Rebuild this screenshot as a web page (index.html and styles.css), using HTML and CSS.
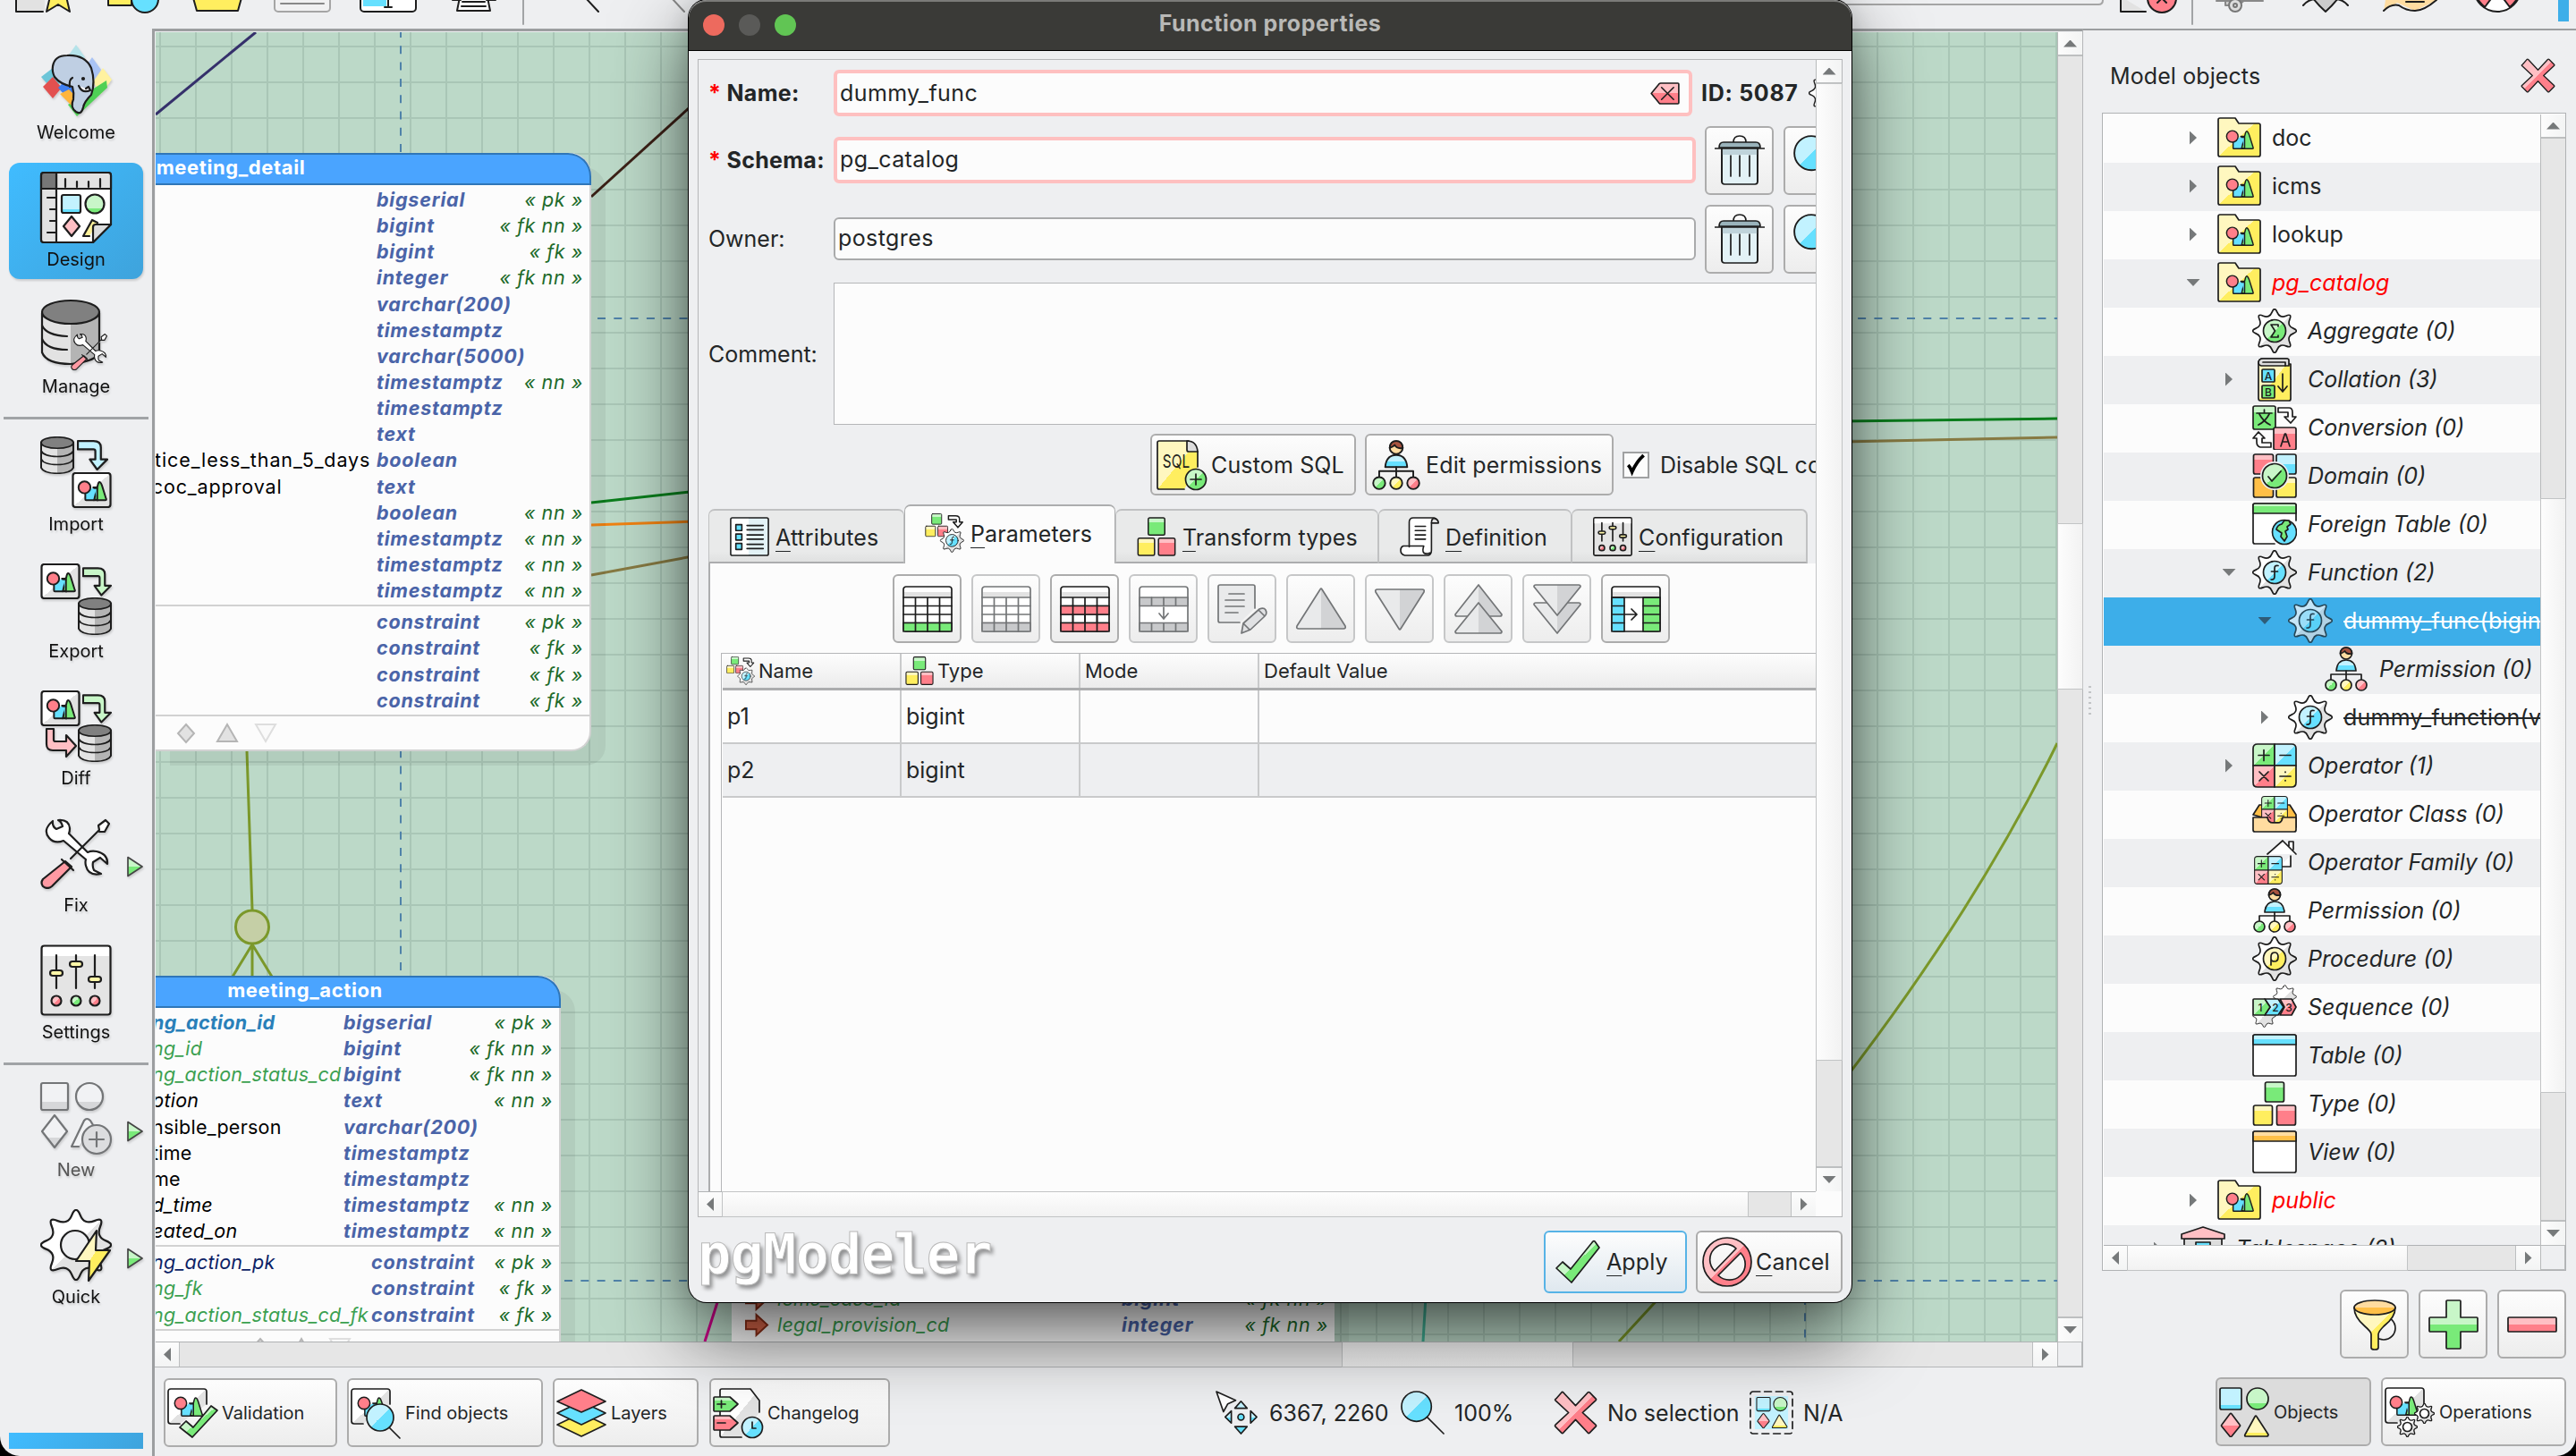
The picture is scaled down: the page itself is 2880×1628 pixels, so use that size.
FILE: index.html
```html
<!DOCTYPE html>
<html lang="en">
<head>
<meta charset="utf-8">
<title>pgModeler</title>
<link rel="stylesheet" href="styles.css">
</head>
<body>
<svg class="sprite" width="0" height="0" aria-hidden="true">
  <defs>
    <linearGradient id="dG" x1="0" y1="0" x2="1" y2="1"><stop offset=".5" stop-color="#c8f6c8"/><stop offset=".5" stop-color="#79ea79"/></linearGradient>
    <linearGradient id="dB" x1="0" y1="0" x2="1" y2="1"><stop offset=".5" stop-color="#c2f2ff"/><stop offset=".5" stop-color="#66e0ff"/></linearGradient>
    <linearGradient id="dR" x1="0" y1="0" x2="1" y2="1"><stop offset=".5" stop-color="#ffbfc4"/><stop offset=".5" stop-color="#ff7f8a"/></linearGradient>
    <linearGradient id="dY" x1="0" y1="0" x2="1" y2="1"><stop offset=".5" stop-color="#fff7bf"/><stop offset=".5" stop-color="#ffee5f"/></linearGradient>
    <linearGradient id="dW" x1="0" y1="0" x2="1" y2="1"><stop offset=".5" stop-color="#fff"/><stop offset=".5" stop-color="#e2e2e2"/></linearGradient>
    <linearGradient id="vG" x1="0" y1="0" x2="0" y2="1"><stop offset=".28" stop-color="#c8f6c8"/><stop offset=".28" stop-color="#79ea79"/></linearGradient>
    <linearGradient id="vB" x1="0" y1="0" x2="0" y2="1"><stop offset=".5" stop-color="#c2f2ff"/><stop offset=".5" stop-color="#66e0ff"/></linearGradient>
    <linearGradient id="vR" x1="0" y1="0" x2="0" y2="1"><stop offset=".28" stop-color="#ffbfc4"/><stop offset=".28" stop-color="#ff7f8a"/></linearGradient>
    <linearGradient id="vY" x1="0" y1="0" x2="0" y2="1"><stop offset=".28" stop-color="#fff7bf"/><stop offset=".28" stop-color="#ffee5f"/></linearGradient>
    <linearGradient id="vO" x1="0" y1="0" x2="0" y2="1"><stop offset=".5" stop-color="#ffdca0"/><stop offset=".5" stop-color="#ffbf47"/></linearGradient>
    <linearGradient id="bB" x1="0" y1="0" x2="0" y2="1"><stop offset=".8" stop-color="#c2f2ff"/><stop offset=".8" stop-color="#66e0ff"/></linearGradient>
    <linearGradient id="bG" x1="0" y1="0" x2="0" y2="1"><stop offset=".72" stop-color="#c8f6c8"/><stop offset=".72" stop-color="#79ea79"/></linearGradient>
    <linearGradient id="bR" x1="0" y1="0" x2="0" y2="1"><stop offset=".5" stop-color="#ffbfc4"/><stop offset=".5" stop-color="#ff7f8a"/></linearGradient>
    <linearGradient id="bY" x1="0" y1="0" x2="0" y2="1"><stop offset=".82" stop-color="#fff7bf"/><stop offset=".82" stop-color="#ffee5f"/></linearGradient>
    <linearGradient id="bW" x1="0" y1="0" x2="0" y2="1"><stop offset=".7" stop-color="#f1f2f4"/><stop offset=".7" stop-color="#d6d7d9"/></linearGradient>
    <linearGradient id="hT" x1="0" y1="0" x2="1" y2="0"><stop offset=".5" stop-color="#e9eaeb"/><stop offset=".5" stop-color="#d2d3d5"/></linearGradient>
    <linearGradient id="hD" x1="0" y1="0" x2="1" y2="0"><stop offset=".5" stop-color="#e2e2e2"/><stop offset=".5" stop-color="#b4b4b4"/></linearGradient>
    <linearGradient id="hA" x1="0" y1="0" x2="0" y2="1"><stop offset=".5" stop-color="#c8f6c8"/><stop offset=".5" stop-color="#79ea79"/></linearGradient>
  </defs>

  <symbol id="trio" viewBox="0 0 36 28"><path d="M20 10h7v15q0 1-1 1H11q-1 0-1-1V17" fill="#66e0ff"/><path d="M21 26l5-20q1-4 3-2 1 1 2 4l5 16q1 2-1 2h-10q-2-1-4 0z" fill="#79ea79"/><path d="M21 11h4v15" fill="#66e0ff"/><circle cx="9" cy="10" r="7.5" fill="#ff7f8a"/></symbol>
  <symbol id="folder" viewBox="0 0 50 50"><path d="M2 5q0-2 2-2h17l4 6h22q2 0 2 2v33q0 2-2 2H4q-2 0-2-2z" fill="url(#dY)"/><use href="#trio" x="7" y="15" width="37" height="24"/></symbol>
  <symbol id="gear" viewBox="0 0 50 50"><path d="M22.1 4.1Q25-3 27.9 4.1 30.700 11.1 37.800 8.200 44.800 5.200 41.900 12.200 38.900 19.300 45.900 22.100 53 25 45.900 27.900 38.900 30.700 41.900 37.800 44.800 44.800 37.800 41.900 30.700 38.900 27.900 45.900 25 53 22.100 45.900 19.300 38.900 12.200 41.900 5.200 44.800 8.100 37.800 11.100 30.700 4.100 27.900-3 25 4.100 22.100 11.100 19.300 8.100 12.200 5.200 5.200 12.200 8.200 19.300 11.100 22.100 4.100z" fill="url(#dW)"/></symbol>
  <symbol id="fn" viewBox="0 0 50 50"><use href="#gear"/><circle cx="25" cy="25" r="12.500" fill="url(#dB)"/><path d="M29 17.500q-4-1-4 3v9q0 4-4 3.500M21.500 24h7" fill="none"/></symbol>
  <symbol id="agg" viewBox="0 0 50 50"><use href="#gear"/><circle cx="25" cy="25" r="12.500" fill="url(#dG)"/><path d="M29 20v-2h-8l4.500 7-4.500 7h8v-2" fill="none"/></symbol>
  <symbol id="proc" viewBox="0 0 50 50"><use href="#gear"/><circle cx="25" cy="25" r="12.500" fill="url(#dY)"/><path d="M21 32v-9q0-5 4-5t4 5-4 5-4-3" fill="none"/></symbol>
  <symbol id="coll" viewBox="0 0 50 50"><path d="M7 7q0-5 5-5h27v3H13v3h30v39q0 2-2 2H9q-2 0-2-3z" fill="url(#dY)"/><path d="M7 7q0-5 5-5h27q2 0 2 2v6H10q-3-1-3-3z" fill="#ddd"/><path d="M12 6h25v4" fill="none"/><rect x="11" y="14" width="14" height="14" rx="1" fill="#66e0ff"/><rect x="11" y="32" width="14" height="14" rx="1" fill="#79ea79"/><text class="gt" x="18" y="25.500">A</text><text class="gt" x="18" y="43.500">B</text><path d="M34 19v19m-5-5 5 6 5-6" fill="none"/></symbol>
  <symbol id="conv" viewBox="0 0 50 50"><rect x="1" y="1" width="25" height="26" rx="2" fill="url(#vG)"/><rect x="24" y="25" width="25" height="25" rx="2" fill="url(#vR)"/><path d="M5 9h17M13.500 5v4M8 10q4 8 12 12M19 10q-4 8-12 12M32 46l4.500-14h1L42 46M33.500 41h7" fill="none"/><path d="M29 3h12q4 0 4 5v5h4l-6 7-7-7h4V8H29zM21 47h-12q-4-1-4-6v-4H1l6-7 7 7h-3v5h10z" fill="#fff"/></symbol>
  <symbol id="dom" viewBox="0 0 50 50"><rect x="1.500" y="1" width="22" height="22" rx="2" fill="url(#vR)"/><rect x="27" y="1" width="22" height="22" rx="2" fill="url(#vB)"/><rect x="1.500" y="27" width="22" height="22" rx="2" fill="#ffbf47"/><rect x="27" y="27" width="22" height="22" rx="2" fill="url(#vY)"/><circle cx="25" cy="25" r="16" fill="#eeeff1" stroke="none"/><circle cx="25" cy="25" r="13.500" fill="url(#dG)"/><path d="M18 26l4 5 10-11" fill="none"/></symbol>
  <symbol id="ftab" viewBox="0 0 50 50"><path d="M25 47H3q-2 0-2-2V4q0-2 2-2h44q2 0 2 2v17" fill="#fff"/><path d="M1 13V4q0-2 2-2h44q2 0 2 2v9z" fill="url(#vG)"/><circle cx="36" cy="34" r="13.500" fill="#66e0ff"/><path d="M27 31q1-5 6-6l3-4h5l2 4-4 3 1 3-3 2 2 6-3 5-4-5 1-4z" fill="#79ea79"/></symbol>
  <symbol id="perm" viewBox="0 0 50 50"><circle cx="25" cy="7.500" r="6.500" fill="#ffdca0"/><path d="M18.500 8Q19 1 25 1t6.500 7q-6 1-8-3-2 2-5 3z" fill="#a9543f"/><path d="M14 27q1-12 11-12t11 12z" fill="url(#vB)"/><path d="M25 27v11M8 37v-6h34v6" fill="none"/><circle cx="8" cy="43" r="6" fill="url(#dG)"/><circle cx="25" cy="43" r="6" fill="url(#dY)"/><circle cx="42" cy="43" r="6" fill="url(#dR)"/></symbol>
  <symbol id="oper" viewBox="0 0 50 50"><path d="M25 1H6Q1 1 1 6v19h24z" fill="url(#dG)"/><path d="M25 1h19q5 0 5 5v19H25z" fill="url(#dB)"/><path d="M25 49H6q-5 0-5-5V25h24z" fill="url(#dR)"/><path d="M25 49h19q5 0 5-5V25H25z" fill="url(#dY)"/><path d="M7 13.500h12m-6-6v12M31 13.500h12M8 32l10 10m0-10-10 10M31 37h12m-6-5v.5m0 9v.5" fill="none"/></symbol>
  <symbol id="opc" viewBox="0 0 50 50"><path d="M1 26 8 15h34l7 11v14z" fill="#ffbf47"/><use href="#oper" x="10" y="4" width="30" height="32"/><path d="M1 29h16q1 6 6 6h6q4 0 5-6h15v14q0 2-2 2H3q-2 0-2-2z" fill="#ffdca0"/></symbol>
  <symbol id="opf" viewBox="0 0 50 50"><path d="M17 16 34 1l15 15M41 7V2h5v9M43 18v12H30" fill="#fff"/><use href="#oper" x="0" y="18" width="36" height="32"/></symbol>
  <symbol id="seq" viewBox="0 0 50 50"><use href="#gear" x="23" y="0" width="27" height="27"/><use href="#gear" x="0" y="21" width="27" height="27"/><path d="M31 16h13l5 9-5 9H31l5-9z" fill="url(#dR)"/><path d="M14 16h15l6 9-6 9H14l6-9z" fill="url(#dB)"/><path d="M1 17q0-1 1-1h12l6 9-6 9H2q-1 0-1-1z" fill="url(#dG)"/><text class="gt" x="9" y="29.500">1</text><text class="gt" x="26" y="29.500">2</text><text class="gt" x="41" y="29.500">3</text></symbol>
  <symbol id="tab" viewBox="0 0 50 50"><rect x="1" y="2" width="48" height="46" rx="2" fill="#fff"/><path d="M1 13V4q0-2 2-2h44q2 0 2 2v9z" fill="url(#vB)"/></symbol>
  <symbol id="view" viewBox="0 0 50 50"><rect x="1" y="2" width="48" height="46" rx="2" fill="#fff"/><path d="M1 13V4q0-2 2-2h44q2 0 2 2v9z" fill="url(#vO)"/></symbol>
  <symbol id="type" viewBox="0 0 50 50"><rect x="14.500" y="1" width="21" height="22" rx="2" fill="url(#vG)"/><rect x="1.500" y="27" width="21" height="22" rx="2" fill="url(#vY)"/><rect x="27.500" y="27" width="21" height="22" rx="2" fill="url(#vR)"/></symbol>
  <symbol id="tspace" viewBox="0 0 50 50"><path d="M4 14h42v35H4z" fill="#ddd"/><path d="M1 14v-5L25 1l24 8v5z" fill="#ffbfc4"/><rect x="17" y="18" width="16" height="20" fill="#66e0ff"/></symbol>
  <symbol id="param" viewBox="0 0 50 50"><use href="#type" width="30" height="30"/><path d="M30 3h9q5 0 5 4v4h4l-6 7-6-7h4V8H30z" fill="#fff"/><use href="#fn" x="19" y="19" width="31" height="31"/></symbol>
  <symbol id="db" viewBox="0 0 40 60" preserveAspectRatio="none"><path d="M1 10v40q3 9 19 9t19-9V10" fill="url(#hD)"/><path d="M1 23q3 9 19 9t19-9M1 36q3 9 19 9t19-9" fill="none"/><ellipse cx="20" cy="10" rx="19" ry="9" fill="#808080"/></symbol>
  <symbol id="card" viewBox="0 0 44 40"><rect x="1" y="1" width="42" height="38" rx="3" fill="url(#dW)"/><use href="#trio" x="4" y="8" width="36" height="25"/></symbol>
  <symbol id="turn" viewBox="0 0 34 34"><path d="M1 2h17q8 0 8 7v13h7L22 33 14 22h6v-9q0-2-2-2H1z"/></symbol>
  <symbol id="tools" viewBox="0 0 80 80"><path d="M12 2q-1 6 4 9l7-3q-1-5-5-7 12-1 13 9 0 4-1 6l21 21q4-2 10-1 13 3 12 14l-8-7-8 5q-1 5 1 9l8 4q-14 3-17-9-1-4 0-7L24 24Q14 28 8 21 0 12 12 2z" fill="#fff" transform="translate(2 2)"/><path d="M34 46 66 14l-1-5 8-6 4 4-5 9-6 0" fill="#fff"/><path d="M28 49l7 6-22 22q-5 4-10 0-3-4 0-8z" fill="#ff9aa3"/><path d="M24 47l13 12" fill="none"/></symbol>
  <symbol id="sliders" viewBox="0 0 80 80"><rect x="1.500" y="1.500" width="77" height="77" rx="3" fill="#e4e4e4"/><path d="M3 3h74v10H3z" fill="#fff" stroke="none"/><path d="M18 12v37M40 12v37M61 12v37" fill="none"/><rect x="11" y="29" width="14" height="6" rx="3" fill="#fff7a8"/><rect x="33" y="19" width="14" height="6" rx="3" fill="#fff7a8"/><rect x="54" y="36" width="14" height="6" rx="3" fill="#fff7a8"/><circle cx="18" cy="63" r="5.500" fill="url(#dR)"/><circle cx="40" cy="63" r="5.500" fill="url(#dG)"/><circle cx="61" cy="63" r="5.500" fill="url(#dR)"/></symbol>
  <symbol id="tri-r" viewBox="0 0 18 24"><path d="M1 1.500 17 12 1 22.500z" fill="url(#hA)" stroke="#444"/></symbol>
  <symbol id="lens" viewBox="0 0 50 50"><path d="M30 30 49 49" fill="none"/><circle cx="18" cy="18" r="17" fill="url(#dB)"/></symbol>
  <symbol id="cross" viewBox="0 0 50 50"><path d="M3 9 9 2q1-1 2 0l14 15L39 2q1-1 2 0l7 7q1 1 0 2L33 25l15 14q1 1 0 2l-7 7q-1 1-2 0L25 33 11 48q-1 1-2 0l-7-7q-1-1 0-2l15-14L2 11q-1-1 1-2z" fill="url(#dR)"/></symbol>
  <symbol id="check" viewBox="0 0 50 50"><path d="M1 32l7-7 9 8L42 2q1-1 2 0l5 7L18 48z" fill="url(#dG)"/></symbol>
  <symbol id="trash" viewBox="0 0 56 56"><path d="M21 8q0-7 7-7t7 7" fill="none"/><path d="M8 15h40v37q0 3-3 3H11q-3 0-3-3z" fill="#e3f2f6"/><path d="M8 15h40v7H8z" fill="#bfd3da" stroke="none"/><path d="M5 14q0-6 5-6h36q5 0 5 6z" fill="#9ab3bb"/><path d="M0 15h56M18 23v23M28 23v23M39 23v23M8 15v37M48 15v37" fill="none"/></symbol>
  <symbol id="grid" viewBox="0 0 56 52"><rect x="1" y="1" width="54" height="50" rx="3" fill="#fff"/><path d="M2 7h52v6H2z" fill="#e2e2e2" stroke="none"/><path d="M1 13h54M1 22.500h54M1 32h54M1 41.500h54M14.500 13v38M28 13v38M41.500 13v38" fill="none"/></symbol>
  <symbol id="shapes" viewBox="0 0 56 56"><rect x="1" y="1" width="24" height="24" rx="2" fill="url(#bB)"/><circle cx="43" cy="13" r="12" fill="url(#bG)"/><path d="M12 30q1-1 2 0l9 12q1 1 0 2l-9 11q-1 1-2 0L3 44q-1-1 0-2z" fill="url(#bR)"/><path d="M40 33q1-2 2 0l13 20q0 2-2 2H30q-2 0-1-2z" fill="url(#bY)"/></symbol>
</svg>

<div class="app">
  <header class="toolbar">
    <svg class="ico bar-left" viewBox="0 0 770 32"><path d="M18-9H50V12H20z" fill="#e2e2e2" stroke="none"/><path d="M18-9V13h30" fill="none"/><path d="M56-4l-4 17 13-8 13 8-4-17z" fill="#ffee5f"/><path d="M121-8V6h26V-8z" fill="#ffee5f"/><circle cx="162" cy="-1" r="15" fill="#66e0ff"/><path d="M215-6l5 18h46l5-18z" fill="#ffee5f"/><rect x="307" y="-20" width="62" height="33" rx="4" fill="#f1f1f2" stroke="#a5a5a5"/><path d="M314 4h48" stroke="#888"/><rect x="403" y="-20" width="62" height="33" rx="4" fill="#fff"/><path d="M406-8h26V7h-26z" fill="#66e0ff" stroke="none"/><path d="M434-5V7m-4 1h8"/><path d="M514-3l-3 15h37l-3-15z" fill="#fff"/><path d="M517 2h25M516 7h27M506 0h9m29 0h10"/><path d="M655-2l14 15"/><path d="M751-2l14 15" stroke="#888"/><path d="M585-2V27" stroke="#a2a4a6"/></svg>
    <svg class="ico bar-right" viewBox="2060 0 820 32"><path d="M2060 5h286q5 0 5-5" fill="none" stroke="#a5a5a5"/><path d="M2371-4V13h28" fill="#e2e2e2"/><circle cx="2417" cy="-2" r="16" fill="#ff7f8a"/><path d="M2412 3l10-10m0 10-10-10"/><path d="M2451-2V27" stroke="#a2a4a6"/><path d="M2478 1h52M2488 0v6h14l8-6" stroke="#888" fill="#ccc"/><circle cx="2499" cy="6" r="7" fill="#ddd" stroke="#777"/><circle cx="2499" cy="6" r="2" stroke="#777"/><path d="M2586-2q6 8 14 15 8-7 14-15z" fill="#ccc"/><path d="M2575 6q6-7 14-7M2625 6q-6-7-14-7" fill="none"/><path d="M2665 12l15-9 20 9 25-12h-58z" fill="#ffdca0" stroke="none"/><path d="M2665 12q8-8 17-6 8 6 18 6t24-12M2690 2h20" fill="none"/><circle cx="2792" cy="-13" r="26" fill="#fff"/><path d="M2767-6q5 9 11 14l9-12zM2817-6q-5 9-11 14l-9-12z" fill="#ff7f8a"/><path d="M2860-2h12V24h-12z" fill="#3daee9" stroke="none"/></svg>
  </header>

  <div class="body">
    <aside class="sidebar">
      <div class="nav"><svg class="ico" viewBox="0 0 80 80"><g stroke="none"><path d="M40 0l10 14-10 14-10-14z" fill="#b5e3ea"/><path d="M58 14l10 14-10 14-10-14z" fill="#a9c3f5"/><path d="M70 26l10 13-12 16-9-13z" fill="#fff2a0"/><path d="M14 26l10 14-9 12-14-16z" fill="#6cc5d8"/><path d="M14 36l10 12-10 12L3 47z" fill="#e2504f"/><path d="M74 40l1 8-34 32-10-13z" fill="#4fd055"/><path d="M28 40l12 10-8 12-12-14z" fill="#3f7ff0"/><path d="M32 50l8 8-5 10-13-13z" fill="#ffb53d"/></g><path d="M14 24Q16 12 30 12q20-1 27 14 5 16 0 30-8 8-9 14-2 9-8 5-7-5-3-14 1-7-1-14Q22 44 16 36q-3-6-2-12z" fill="#bfcfe3"/><path d="M33 47q-1-8 3-10M43 46q4 9 13 5l-2-4-3 2" fill="#fff"/><circle cx="48" cy="38" r="1" fill="#222"/></svg><span>Welcome</span></div>
      <div class="nav on"><svg class="ico" viewBox="0 0 80 80"><path d="M1 4q0-3 3-3h72q3 0 3 3v55L59 79H4q-3 0-3-3z" fill="#fff"/><path d="M18 1h58q3 0 3 3v15H18zM1 19h17v60H4q-3 0-3-3z" fill="#e2e2e2"/><path d="M1 19V4q0-3 3-3h14v18z" fill="#777"/><path d="M28 8v9M41 11v6M54 11v6M67 8v9M8 29h9M11 42h6M11 55h6M8 68h9" fill="none"/><rect x="24" y="26" width="21" height="20" rx="2" fill="url(#bB)"/><circle cx="61" cy="36" r="10.500" fill="url(#bG)"/><path d="M35 50l9 11-9 11-9-11z" fill="#ffbfc4"/><path d="M55 72h-7l10-18 6 3" fill="#fff29b"/><path d="M79 59H62q-3 0-3 3v17z" fill="#ddd"/></svg><span>Design</span></div>
      <div class="nav"><svg class="ico" viewBox="0 0 80 80"><path d="M2 16v44q5 13 32 13 30-3 32-14V16" fill="url(#hD)"/><path d="M2 30q5 11 28 12M2 45q5 12 28 12" fill="none"/><ellipse cx="34" cy="15" rx="32" ry="13" fill="#808080"/><use href="#tools" x="34" y="38" width="42" height="42"/></svg><span>Manage</span></div>
      <i class="rule"></i>
      <div class="nav"><svg class="ico" viewBox="0 0 80 80"><use href="#db" x="0" y="0" width="38" height="42"/><use href="#turn" x="41" y="3" width="35" height="35" fill="#c2f2ff"/><use href="#card" x="35" y="40" width="45" height="40"/></svg><span>Import</span></div>
      <div class="nav"><svg class="ico" viewBox="0 0 80 80"><use href="#card" x="0" y="0" width="45" height="40"/><use href="#turn" x="47" y="3" width="33" height="34" fill="#c8f6c8"/><use href="#db" x="42" y="38" width="38" height="42"/></svg><span>Export</span></div>
      <div class="nav"><svg class="ico" viewBox="0 0 80 80"><use href="#card" x="0" y="0" width="45" height="40"/><use href="#turn" x="47" y="3" width="33" height="34" fill="#c8f6c8"/><path d="M7 43h8v12q0 2 2 2h12v-7l11 12-11 12v-7H14q-7 0-7-7z" fill="#ffbfc4"/><use href="#db" x="42" y="38" width="38" height="42"/></svg><span>Diff</span></div>
      <div class="nav more"><svg class="ico" viewBox="0 0 80 80"><use href="#tools"/></svg><span>Fix</span><svg class="ico mini"><use href="#tri-r"/></svg></div>
      <div class="nav"><svg class="ico" viewBox="0 0 80 80"><use href="#sliders"/></svg><span>Settings</span></div>
      <i class="rule"></i>
      <div class="nav more off"><svg class="ico dim" viewBox="0 0 80 80"><rect x="1" y="1" width="30" height="30" rx="2" fill="url(#bW)"/><circle cx="55" cy="16" r="15" fill="url(#bW)"/><path d="M16 37l14 18-14 18L2 55z" fill="url(#bW)"/><path d="M43 72h-8l14-29q3-4 7 0l3 5" fill="#f1f2f4"/><circle cx="63" cy="64" r="16" fill="#dcdddf"/><path d="M63 56v16M55 64h16" fill="none"/></svg><span>New</span><svg class="ico mini"><use href="#tri-r"/></svg></div>
      <div class="nav more"><svg class="ico thin" viewBox="0 0 80 80"><use href="#gear" x="0" y="0" width="80" height="80"/><circle cx="39" cy="40" r="16" fill="#eeeff1" stroke-width="2.200"/><path d="M63 24 40 58h15l-1 22 24-34H62z" fill="url(#dY)" stroke-width="2.200"/></svg><span>Quick</span><svg class="ico mini"><use href="#tri-r"/></svg></div>
      <i class="foot"></i>
    </aside>

    <main class="center">
      <div class="viewport">
        <div class="canvas">
          <svg class="links" viewBox="174 36 2126 1464">
            <g stroke="#4f82a9" stroke-width="2" stroke-dasharray="9 9.300"><path d="M448 33V1500"/><path d="M668 356H2300" stroke-dashoffset="0"/><path d="M2018 1450V1500"/><path d="M631 1432H2300"/></g>
            <g fill="none" stroke-width="3"><path d="M286 36 174 128" stroke="#35306b"/><path d="M661 220 780 112" stroke="#3c2117"/><path d="M661 562 780 549M2060 471 2300 468" stroke="#0a7d1c"/><path d="M661 587 780 583" stroke="#f08212"/><path d="M661 643 780 621M2060 494 2300 489" stroke="#877a42"/><path d="M276 840 282 1017M282 1056 260 1092M282 1056V1092M282 1056 304 1092M2300 831Q2210 1015 2060 1210M1856 1450 1810 1500" stroke="#7b982a"/><circle cx="282" cy="1036.500" r="18.500" fill="#c5cfa6" stroke="#7b982a"/><path d="M804 1450 788 1500" stroke="#cc0088"/><path d="M1594 1450 1591 1500" stroke="#3fae93"/></g>
          </svg>

          <section class="tbl t1">
            <h3>meeting_detail</h3>
            <div class="sec">
              <p><b></b><i>bigserial</i><em>« pk »</em></p>
              <p><b></b><i>bigint</i><em>« fk nn »</em></p>
              <p><b></b><i>bigint</i><em>« fk »</em></p>
              <p><b></b><i>integer</i><em>« fk nn »</em></p>
              <p><b></b><i>varchar(200)</i></p>
              <p><b></b><i>timestamptz</i></p>
              <p><b></b><i>varchar(5000)</i></p>
              <p><b></b><i>timestamptz</i><em>« nn »</em></p>
              <p><b></b><i>timestamptz</i></p>
              <p><b></b><i>text</i></p>
              <p><b>tice_less_than_5_days</b><i>boolean</i></p>
              <p class="cut"><b>_coc_approval</b><i>text</i></p>
              <p><b></b><i>boolean</i><em>« nn »</em></p>
              <p><b></b><i>timestamptz</i><em>« nn »</em></p>
              <p><b></b><i>timestamptz</i><em>« nn »</em></p>
              <p><b></b><i>timestamptz</i><em>« nn »</em></p>
            </div>
            <div class="sec">
              <p><b></b><i>constraint</i><em>« pk »</em></p>
              <p><b></b><i>constraint</i><em>« fk »</em></p>
              <p><b></b><i>constraint</i><em>« fk »</em></p>
              <p><b></b><i>constraint</i><em>« fk »</em></p>
            </div>
            <div class="tfoot"><svg viewBox="0 0 130 24"><path d="M15 2l9 10-9 10-9-10zM61 2l11 19H50z" fill="#e2e2e2" stroke="#b5b5b5" stroke-width="2"/><path d="M93 2h22l-11 19z" fill="#fafafa" stroke="#dedede" stroke-width="2"/></svg></div>
          </section>

          <section class="tbl t2">
            <h3>meeting_action</h3>
            <div class="sec">
              <p class="pk"><b>ng_action_id</b><i>bigserial</i><em>« pk »</em></p>
              <p class="fk"><b>ng_id</b><i>bigint</i><em>« fk nn »</em></p>
              <p class="fk"><b>ng_action_status_cd</b><i>bigint</i><em>« fk nn »</em></p>
              <p class="nn"><b>ption</b><i>text</i><em>« nn »</em></p>
              <p><b>nsible_person</b><i>varchar(200)</i></p>
              <p><b>time</b><i>timestamptz</i></p>
              <p><b>me</b><i>timestamptz</i></p>
              <p class="nn"><b>d_time</b><i>timestamptz</i><em>« nn »</em></p>
              <p class="nn"><b>eated_on</b><i>timestamptz</i><em>« nn »</em></p>
            </div>
            <div class="sec con">
              <p class="cpk"><b>ng_action_pk</b><i>constraint</i><em>« pk »</em></p>
              <p class="fk"><b>ng_fk</b><i>constraint</i><em>« fk »</em></p>
              <p class="fk"><b>ng_action_status_cd_fk</b><i>constraint</i><em>« fk »</em></p>
            </div>
            <div class="tfoot"><svg viewBox="0 0 130 24"><path d="M15 2l9 10-9 10-9-10zM61 2l11 19H50z" fill="#e2e2e2" stroke="#b5b5b5" stroke-width="2"/><path d="M93 2h22l-11 19z" fill="#fafafa" stroke="#dedede" stroke-width="2"/></svg></div>
          </section>

          <section class="tbl t3">
            <p class="fk"><svg class="arr" viewBox="0 0 28 28"><path d="M1 9h12V2l13 12-13 12v-7H1z"/></svg><b>lcms_case_id</b><i>bigint</i><em>« fk nn »</em></p>
            <p class="fk"><svg class="arr" viewBox="0 0 28 28"><path d="M1 9h12V2l13 12-13 12v-7H1z"/></svg><b>legal_provision_cd</b><i>integer</i><em>« fk nn »</em></p>
          </section>
        </div>
        <div class="sv"><span class="up"></span><i class="groove main-g"></i><i class="thumb main-v"></i><i class="groove rest"></i><span class="down"></span></div>
        <div class="sh"><span class="left"></span><i class="groove main-h"></i><i class="thumb main-ht"></i><i class="groove rest"></i><span class="right"></span></div>
        <div class="corner"></div>
      </div>

      <footer class="status">
        <button class="btn w1"><svg class="ico" viewBox="0 0 56 56"><path d="M44 18V4q0-3-3-3H4Q1 1 1 4v33q0 3 3 3h10" fill="url(#dW)"/><use href="#trio" x="4" y="8" width="38" height="25"/><path d="M14 44l7-7 8 7 20-24 7 5L28 55z" fill="url(#dG)"/></svg>Validation</button>
        <button class="btn w2"><svg class="ico" viewBox="0 0 56 56"><path d="M44 18V4q0-3-3-3H4Q1 1 1 4v33q0 3 3 3h10" fill="url(#dW)"/><use href="#trio" x="4" y="8" width="38" height="25"/><path d="M42 43l13 13" fill="none"/><circle cx="33" cy="33" r="15" fill="url(#dB)"/></svg>Find objects</button>
        <button class="btn w3"><svg class="ico" viewBox="0 0 56 56"><path d="M28 28l27 13-27 13L1 41z" fill="#ffee5f"/><path d="M28 15l27 13-27 13L1 28z" fill="#66e0ff"/><path d="M28 2l27 13-27 12L1 15z" fill="#ff7f8a"/></svg>Layers</button>
        <button class="btn w4"><svg class="ico" viewBox="0 0 56 56"><path d="M52 27V14L42 1H10q-2 0-2 2v50q0 2 2 2h22" fill="url(#dW)"/><path d="M1 11q0-1 1-1h17l9 8-9 8H2q-1 0-1-1z" fill="url(#vG)"/><path d="M1 32q0-1 1-1h17l9 8-9 8H2q-1 0-1-1z" fill="url(#vR)"/><path d="M5 18h9m-4.500-4v8M5 39h9" fill="none"/><circle cx="44" cy="44" r="11.500" fill="url(#dB)"/><path d="M44 38v7h4" fill="none"/></svg>Changelog</button>
        <div class="info i1"><svg class="ico" viewBox="0 0 50 50"><path d="M1 1l22 10-9 4-5 9z" fill="#fff"/><path d="M29 12l7 8H22zM29 49l7-8H22zM11 30l7-7v14zM47 30l-7-7v14z" fill="url(#vB)"/><circle cx="29" cy="30" r="3.500" fill="#66e0ff"/></svg>6367, 2260</div>
        <div class="info i2"><svg class="ico"><use href="#lens"/></svg>100%</div>
        <div class="info i3"><svg class="ico"><use href="#cross"/></svg>No selection</div>
        <div class="info i4"><svg class="ico" viewBox="0 0 50 50"><path d="M6 6h38v38H6z" fill="#c2f2ff" stroke="none"/><rect x="1" y="1" width="48" height="48" rx="3" fill="none" stroke-dasharray="8 5"/><use href="#shapes" x="7" y="7" width="37" height="36"/></svg>N/A</div>
      </footer>
    </main>

    <aside class="panel">
      <div class="split"></div>
      <div class="phead"><h2>Model objects</h2><svg class="ico x"><use href="#cross"/></svg></div>
      <div class="tree">
        <ul>
          <li class="l1"><i class="c"></i><svg class="ico"><use href="#folder"/></svg>doc</li>
          <li class="l1"><i class="c"></i><svg class="ico"><use href="#folder"/></svg>icms</li>
          <li class="l1"><i class="c"></i><svg class="ico"><use href="#folder"/></svg>lookup</li>
          <li class="l1 red"><i class="o"></i><svg class="ico"><use href="#folder"/></svg>pg_catalog</li>
          <li class="l2 it"><i></i><svg class="ico"><use href="#agg"/></svg>Aggregate (0)</li>
          <li class="l2 it"><i class="c"></i><svg class="ico"><use href="#coll"/></svg>Collation (3)</li>
          <li class="l2 it"><i></i><svg class="ico"><use href="#conv"/></svg>Conversion (0)</li>
          <li class="l2 it"><i></i><svg class="ico"><use href="#dom"/></svg>Domain (0)</li>
          <li class="l2 it"><i></i><svg class="ico"><use href="#ftab"/></svg>Foreign Table (0)</li>
          <li class="l2 it"><i class="o"></i><svg class="ico"><use href="#fn"/></svg>Function (2)</li>
          <li class="l3 del sel"><i class="o"></i><svg class="ico"><use href="#fn"/></svg>dummy_func(bigint,</li>
          <li class="l4 it"><i></i><svg class="ico"><use href="#perm"/></svg>Permission (0)</li>
          <li class="l3 del"><i class="c"></i><svg class="ico"><use href="#fn"/></svg>dummy_function(va</li>
          <li class="l2 it"><i class="c"></i><svg class="ico"><use href="#oper"/></svg>Operator (1)</li>
          <li class="l2 it"><i></i><svg class="ico"><use href="#opc"/></svg>Operator Class (0)</li>
          <li class="l2 it"><i></i><svg class="ico"><use href="#opf"/></svg>Operator Family (0)</li>
          <li class="l2 it"><i></i><svg class="ico"><use href="#perm"/></svg>Permission (0)</li>
          <li class="l2 it"><i></i><svg class="ico"><use href="#proc"/></svg>Procedure (0)</li>
          <li class="l2 it"><i></i><svg class="ico"><use href="#seq"/></svg>Sequence (0)</li>
          <li class="l2 it"><i></i><svg class="ico"><use href="#tab"/></svg>Table (0)</li>
          <li class="l2 it"><i></i><svg class="ico"><use href="#type"/></svg>Type (0)</li>
          <li class="l2 it"><i></i><svg class="ico"><use href="#view"/></svg>View (0)</li>
          <li class="l1 red"><i class="c"></i><svg class="ico"><use href="#folder"/></svg>public</li>
          <li class="l0 it"><i class="c"></i><svg class="ico"><use href="#tspace"/></svg>Tablespace (2)</li>
        </ul>
        <div class="sv"><span class="up"></span><i class="groove tree-v"></i><i class="thumb rest"></i><i class="groove tree-v2"></i><span class="down"></span></div>
        <div class="sh"><span class="left"></span><i class="thumb tree-h"></i><i class="groove rest"></i><span class="right"></span></div>
        <div class="corner"></div>
      </div>
      <div class="pbtns">
        <button class="btn sq"><svg class="ico" viewBox="0 0 56 56"><circle cx="38" cy="32" r="13" fill="none"/><path d="M5 9q0 11 12 21 7 6 7 9v15q0 2 4 2t4-2V39q0-3 6-9 13-10 13-21z" fill="url(#dY)"/><ellipse cx="28" cy="9" rx="23" ry="8" fill="url(#vO)"/></svg></button>
        <button class="btn sq"><svg class="ico" viewBox="0 0 56 56"><path d="M20 2q0-1 1-1h14q1 0 1 1v18h18q1 0 1 1v14q0 1-1 1H36v18q0 1-1 1H21q-1 0-1-1V36H2q-1 0-1-1V21q0-1 1-1h18z" fill="url(#hA)"/></svg></button>
        <button class="btn sq"><svg class="ico" viewBox="0 0 56 56"><rect x="1" y="20" width="54" height="16" rx="1" fill="url(#bR)"/></svg></button>
      </div>
      <div class="pbtns last">
        <button class="btn w5 down-state"><svg class="ico"><use href="#shapes"/></svg>Objects</button>
        <button class="btn w6"><svg class="ico" viewBox="0 0 56 56"><path d="M44 18V4q0-3-3-3H4Q1 1 1 4v33q0 3 3 3h10" fill="url(#dW)"/><use href="#trio" x="4" y="8" width="34" height="25"/><g stroke-width="3"><use href="#gear" x="33" y="18" width="23" height="23"/><use href="#gear" x="14" y="33" width="23" height="23"/></g><circle cx="44.500" cy="29.500" r="5" fill="#fff"/><circle cx="25.500" cy="44.500" r="5" fill="#fff"/></svg>Operations</button>
      </div>
    </aside>
  </div>

  <div class="dialog">
    <div class="title"><i class="r"></i><i class="m"></i><i class="g"></i><span>Function properties</span></div>
    <div class="frame">
      <div class="content">
        <div class="row r1"><label class="req"><u>*</u> Name:</label><div class="input pink n">dummy_func<svg class="ico clr" viewBox="0 0 34 26"><path d="M1 13 10 2q1-1 2-1h20q1 0 1 1v22q0 1-1 1H12q-1 0-2-1z" fill="url(#bR)"/><path d="M13 6l14 14m0-14L13 20" fill="none"/></svg></div><span class="id">ID: 5087</span><svg class="ico cog"><use href="#gear"/></svg></div>
        <div class="row r2"><label class="req"><u>*</u> Schema:</label><div class="input pink">pg_catalog</div><button class="btn sq"><svg class="ico"><use href="#trash"/></svg></button><button class="btn sq"><svg class="ico"><use href="#lens"/></svg></button></div>
        <div class="row r2"><label>Owner:</label><div class="input grey">postgres</div><button class="btn sq"><svg class="ico"><use href="#trash"/></svg></button><button class="btn sq"><svg class="ico"><use href="#lens"/></svg></button></div>
        <div class="row r4"><label>Comment:</label><div class="area"></div></div>
        <div class="row r5">
          <button class="btn w7"><svg class="ico" viewBox="0 0 56 56"><path d="M46 30V13L36 1H3Q1 1 1 3v50q0 2 2 2h28" fill="url(#dY)"/><path d="M46 13H36q-2 0-2-2V1q11 0 12 12z" fill="#ddd"/><text class="sql" transform="translate(22 31) scale(.85 1.150)">SQL</text><circle cx="44" cy="44" r="11.500" fill="url(#dG)"/><path d="M38 44h12m-6-6v12" fill="none"/></svg>Custom SQL</button>
          <button class="btn w8"><svg class="ico"><use href="#perm"/></svg>Edit permissions</button>
          <i class="box"><svg viewBox="0 0 24 24"><path d="M4 12q2 2 4 7 5-11 12-17" fill="none" stroke="#000" stroke-width="3.500"/></svg></i><span>Disable SQL code</span>
        </div>
        <nav class="tabs">
          <a class="a1"><svg class="ico" viewBox="0 0 46 46"><rect x="1" y="1" width="44" height="44" rx="2" fill="#e3f2f6"/><path d="M2 2h20v42H2z" fill="#fff" stroke="none"/><path d="M7 9h7v7H7zM7 20h7v7H7zM7 31h7v7H7z" fill="#66e0ff"/><path d="M20 10h19M20 15h19M20 21h19M20 26h19M20 32h19M20 37h19" fill="none"/></svg><span><u>A</u>ttributes</span></a>
          <a class="a2 cur"><svg class="ico"><use href="#param"/></svg><span><u>P</u>arameters</span></a>
          <a class="a3"><svg class="ico"><use href="#type"/></svg><span><u>T</u>ransform types</span></a>
          <a class="a4"><svg class="ico" viewBox="0 0 46 46"><path d="M11 35V6q0-5 5-5h24q4 1 5 6h-8v32q0 6-5 6H6q-5-1-5-6 0-4 3-5h24q-2 6 0 8t7 0" fill="#fff"/><path d="M18 11h12M18 16h12M18 21h12M18 26h12M37 7q0-6 4-5 4 1 4 5z" fill="#ddd"/></svg><span><u>D</u>efinition</span></a>
          <a class="a5"><svg class="ico thick"><use href="#sliders"/></svg><span><u>C</u>onfiguration</span></a>
        </nav>
        <div class="pane">
          <div class="tools">
            <button class="btn sq"><svg class="ico" viewBox="0 0 56 52"><use href="#grid"/><path d="M1 41.500h54V51H1z" fill="#79ea79"/><path d="M14.500 41v10M28 41v10M41.500 41v10"/></svg></button>
            <button class="btn sq off"><svg class="ico dim" viewBox="0 0 56 52"><use href="#grid"/><path d="M1 41.500h54V51H1z" fill="#c8c9cb"/><path d="M14.500 41v10M28 41v10M41.500 41v10"/></svg></button>
            <button class="btn sq"><svg class="ico" viewBox="0 0 56 52"><use href="#grid"/><path d="M1 22.500h54V32H1zM1 41.500h54V51H1z" fill="#ff7f8a"/><path d="M14.500 22v29M28 22v29M41.500 22v29"/></svg></button>
            <button class="btn sq off"><svg class="ico dim" viewBox="0 0 56 52"><rect x="1" y="1" width="54" height="50" rx="3" fill="#fff"/><path d="M1 13h54v9.500H1zM1 41.500h54V51H1z" fill="#c8c9cb"/><path d="M14.500 13v9M28 13v9M41.500 13v9M14.500 42v9M28 42v9M41.500 42v9M28 24v12m-5-5 5 6 5-6" fill="none"/></svg></button>
            <button class="btn sq off"><svg class="ico dim" viewBox="0 0 56 56"><path d="M42 27V3q0-2-2-2H3Q1 1 1 3v38q0 2 2 2h22" fill="#e9eaeb"/><path d="M13 11h17M9 18h21M9 25h21M9 32h14" fill="none"/><path d="M27 55l2-11 18-16q5-2 7 1 2 4-1 7L37 51zM29 44l7 7M46 29l7 7" fill="#e0e1e3"/></svg></button>
            <button class="btn sq off"><svg class="ico dim" viewBox="0 0 56 56"><path d="M27 6q1-2 2 0l26 41q1 3-2 3H3q-3 0-2-3z" fill="url(#hT)"/></svg></button>
            <button class="btn sq off"><svg class="ico dim" viewBox="0 0 56 56"><path d="M27 50q1 2 2 0L55 9q1-3-2-3H3Q0 6 1 9z" fill="url(#hT)"/></svg></button>
            <button class="btn sq off"><svg class="ico dim" viewBox="0 0 56 56"><path d="M28 1 54 34q0 2-2 2H4q-2 0-2-2z" fill="url(#hT)"/><path d="M28 21 54 53q0 2-2 2H4q-2 0-2-2z" fill="url(#hT)"/></svg></button>
            <button class="btn sq off"><svg class="ico dim" viewBox="0 0 56 56"><path d="M28 55 54 23q0-2-2-2H4q-2 0-2 2z" fill="url(#hT)"/><path d="M28 35 54 3q0-2-2-2H4Q2 1 2 3z" fill="url(#hT)"/></svg></button>
            <button class="btn sq"><svg class="ico" viewBox="0 0 56 52"><rect x="1" y="1" width="54" height="50" rx="3" fill="#fff"/><path d="M2 7h52v6H2z" fill="#e2e2e2" stroke="none"/><path d="M1 13h14v38H1z" fill="#66e0ff"/><path d="M36 13h19v38H36z" fill="#79ea79"/><path d="M1 13h54M1 22.500h14M1 32h14M1 41.500h14M36 22.500h19M36 32h19M36 41.500h19M13 32h16m-6-6 6 6-6 6" fill="none"/></svg></button>
          </div>
          <div class="dgrid">
            <div class="hd"><span><svg class="ico"><use href="#param"/></svg>Name</span><span><svg class="ico"><use href="#type"/></svg>Type</span><span>Mode</span><span>Default Value</span></div>
            <div class="tr"><span>p1</span><span>bigint</span><span></span><span></span></div>
            <div class="tr alt"><span>p2</span><span>bigint</span><span></span><span></span></div>
          </div>
        </div>
      </div>
      <div class="sv"><span class="up"></span><i class="thumb rest"></i><i class="groove dlg-v"></i><span class="down"></span></div>
      <div class="sh"><span class="left"></span><i class="thumb rest"></i><i class="groove dlg-h"></i><span class="right"></span></div>
      <div class="corner light"></div>
    </div>
    <div class="dfoot">
      <div class="logo">pgModeler</div>
      <button class="btn focus"><svg class="ico"><use href="#check"/></svg><span><u>A</u>pply</span></button>
      <button class="btn cancel"><svg class="ico" viewBox="0 0 56 56"><path fill-rule="evenodd" d="M28 1a27 27 0 1 0 0 54 27 27 0 1 0 0-54zM14 38A17 17 0 0 1 38 13zM43 18A17 17 0 0 1 18 43z" fill="url(#dR)"/></svg><span><u>C</u>ancel</span></button>
    </div>
  </div>
</div>
</body>
</html>
```
FILE: styles.css
```css
* { box-sizing: border-box; }
body { margin: 0; background: #000; font-family: Inter, "Liberation Sans", sans-serif; font-size: 25px; color: #232627; }
h2, h3, p, ul { margin: 0; padding: 0; font-weight: normal; list-style: none; }
button { font: inherit; color: inherit; padding: 0; margin: 0; }
svg { display: block; flex: none; overflow: visible; }
.sprite { position: absolute; }
.ico { stroke: #1d1d1d; stroke-width: 1.7; stroke-linejoin: round; stroke-linecap: round; fill: none; }
.dim { stroke: #737577; }
.gt { font: 500 12px Inter, sans-serif; fill: #1d1d1d; stroke: none; text-anchor: middle; }
.sql { font: 400 18px Inter, sans-serif; fill: #1d1d1d; stroke: none; text-anchor: middle; }

.app { position: relative; width: 2880px; height: 1628px; overflow: hidden; background: #eeeff1; border-radius: 0 0 22px 22px; display: grid; grid-template-rows: 32px 1fr; }
.toolbar { display: flex; justify-content: space-between; overflow: hidden; }
.bar-left, .bar-right { height: 32px; stroke-width: 2; }
.bar-left { width: 770px; }
.bar-right { width: 820px; }
.body { display: flex; }

/* left navigation */
.sidebar { width: 173px; border-right: 3px solid #9c9ea0; padding: 8px 10px 0; display: flex; flex-direction: column; gap: 12px; position: relative; }
.nav { height: 130px; border-radius: 12px; padding-top: 10px; display: flex; flex-direction: column; align-items: center; position: relative; font-size: 20px; color: #111; filter: drop-shadow(1px 2px 1px rgba(0,0,0,.15)); }
.nav > svg:first-child { width: 80px; height: 80px; stroke-width: 2.2; }
.nav > svg.thin:first-child { stroke-width: 1.4; }
.nav span { line-height: 24px; margin-top: 6px; }
.nav.on { background: linear-gradient(135deg, #40bcff, #3ea3dc); }
.nav.off { color: #555; }
.nav .mini { position: absolute; left: 132px; top: 53px; width: 18px; height: 24px; }
.rule { height: 3px; margin: 0 -6px -3px; background: #a0a3a6; }
.foot { margin: auto 0 8px; height: 18px; background: linear-gradient(135deg, #40bcff, #3ea3dc); }

/* model canvas */
.center { width: 2156px; display: flex; flex-direction: column; }
.viewport { height: 1497px; border-top: 3px solid #9c9ea0; border-right: 1px solid #b4b6b8; border-bottom: 1px solid #b4b6b8; padding: 1px 0 0 1px; display: grid; grid-template: 1464px 28px / 2126px 28px; }
.canvas { position: relative; overflow: hidden; background-color: #bcd9c8; background-image: linear-gradient(90deg, #a9c6b6 2px, transparent 2px), linear-gradient(#a9c6b6 2px, transparent 2px); background-size: 40px 40px; background-position: 4px 0, 0 15px; }
.links { position: absolute; inset: 0; width: 2126px; height: 1464px; }
.tbl { position: absolute; left: 0; background: #fcfcfc; font-size: 21.500px; box-shadow: 16px 16px 0 rgba(0,0,0,.05); }
.tbl h3 { height: 36px; margin: 0 -2px 0 0; background: #4aa4ff; border: 2px solid #2f76b8; border-left: 0; border-radius: 0 26px 0 0; color: #fff; font-weight: 700; font-size: 22px; line-height: 29px; text-align: center; letter-spacing: .6px; white-space: nowrap; }
.tbl p { height: 29.150px; line-height: 29px; display: flex; align-items: center; white-space: nowrap; padding-right: 7px; }
.tbl b { font-weight: 400; color: #000; flex: none; letter-spacing: .25px; }
.tbl i { font-weight: 700; color: #4a64a8; letter-spacing: .8px; }
.tbl em { margin-left: auto; color: #206a2a; letter-spacing: .6px; }
.tbl .sec { padding: 2px 0 1px; border-bottom: 2px solid #d2d2d2; }
.tbl .sec + .sec { padding-top: 3px; }
.t1 { top: 135px; width: 487px; height: 669px; border-radius: 0 24px 22px 0; border-right: 2px solid #d2d2d2; border-bottom: 2px solid #d2d2d2; }
.t1 h3 { padding-right: 317px; }
.t1 b { width: 247px; margin-left: -1px; letter-spacing: .9px; }
.t1 .cut b { width: 261px; margin-left: -15px; }
.t1 i { margin-left: 1px; }
.t2 { top: 1055px; width: 453px; height: 500px; border-radius: 0 24px 0 0; border-right: 2px solid #d2d2d2; }
.t2 h3 { padding-right: 117px; }
.t2 b { width: 214px; margin-left: -4px; }
.t2 .con b { width: 245px; }
.t2 .pk b { font-weight: 700; font-style: italic; color: #2980b9; letter-spacing: .3px; }
.tbl .fk b { font-style: italic; color: #3ba050; }
.tbl .nn b { font-style: italic; }
.tbl .cpk b { font-style: italic; color: #0c1f66; }
.tfoot { padding: 7px 0 0 19px; }
.t2 .tfoot { padding-left: 102px; }
.tfoot svg { width: 130px; height: 24px; }
.t3 { left: 644px; top: 1402px; width: 674px; height: 70px; }
.t3 p { padding-left: 14px; }
.t3 b { width: 385px; margin-left: 8px; }
.arr { width: 29px; height: 27px; fill: #d9674a; stroke: #8c2f18; stroke-width: 2; }

/* scrollbars */
.sv, .sh { display: flex; background: #e6e6e6; }
.sv { flex-direction: column; border-left: 1px solid #b8babb; }
.sh { border-top: 1px solid #b0b2b4; }
.sv > *, .sh > * { flex: none; display: block; position: relative; }
.sv span { height: 27px; background: linear-gradient(90deg, #fcfcfc, #f3f4f4); }
.sh span { width: 27px; background: linear-gradient(#fcfcfc, #f3f4f4); }
.sv .up { border-bottom: 2px solid #bdbfc0; }
.sv .down { border-top: 2px solid #bdbfc0; height: 28px; }
.sh .left { border-right: 1px solid #bdbfc0; }
.sh .right { border-left: 1px solid #bdbfc0; width: 28px; }
.sv span::after, .sh span::after { content: ""; position: absolute; inset: 0; margin: auto; background: #76797a; width: 15px; height: 8px; }
.up::after { clip-path: polygon(50% 0, 100% 100%, 0 100%); }
.down::after { clip-path: polygon(0 0, 100% 0, 50% 100%); }
.sh span::after { width: 8px; height: 15px; }
.left::after { clip-path: polygon(100% 0, 100% 100%, 0 50%); }
.right::after { clip-path: polygon(0 0, 100% 50%, 0 100%); }
.sv .thumb { background: linear-gradient(90deg, #fdfdfd, #f2f2f2); box-shadow: 0 0 0 1px #c2c4c5; }
.sh .thumb { background: linear-gradient(#fdfdfd, #f2f2f2); box-shadow: 0 0 0 1px #c2c4c5; }
.sv .rest, .sh .rest { flex: 1; }
.main-g { height: 523px; }
.main-v { height: 184px; }
.main-h { width: 1300px; }
.main-ht { width: 257px; }
.tree-v { height: 403px; }
.tree-v2 { height: 143px; }
.tree-h { width: 312px; }
.dlg-v { height: 119px; }
.dlg-h { width: 48px; }
.corner { border: 1px solid #b8babb; background: #eeeff1; }
.corner.light { background: #fcfcfc; border: 0; }

/* buttons */
.btn { display: flex; align-items: center; border: 2.500px solid #acacac; border-radius: 6px; background: linear-gradient(#fdfdfd, #ededed); white-space: nowrap; }
.btn .ico { width: 56px; height: 56px; }
.btn.sq { width: 77px; height: 77px; justify-content: center; flex: none; }
.btn.off { border-color: #c6c7c8; }
.btn.down-state { background: #dcdcdc; }

/* status bar */
.status { flex: 1; display: flex; padding: 12px 0 0 10px; }
.status .btn, .last .btn { height: 77px; font-size: 20px; padding-left: 2px; gap: 5px; }
.w1 { width: 194px; margin-right: 11px; }
.w2 { width: 219px; margin-right: 11px; }
.w3 { width: 163px; margin-right: 12px; }
.w4 { width: 202px; margin-right: 364px; }
.info { display: flex; align-items: center; gap: 11px; height: 77px; font-size: 25px; }
.info .ico { width: 49px; height: 49px; }
.i1 { width: 207px; } .i2 { width: 171px; } .i3 { width: 219px; }

/* object panel */
.panel { flex: 1; border-top: 2px solid #9c9ea0; padding: 0 11px 0 21px; position: relative; }
.split { position: absolute; left: 6px; top: 733px; width: 3px; height: 34px; background: repeating-linear-gradient(#c2c4c6 0 2px, transparent 2px 6px); }
.phead { height: 92px; padding: 9px 12px 0 9px; display: flex; justify-content: space-between; align-items: center; }
.phead h2 { font-size: 25px; letter-spacing: .1px; }
.phead .x { width: 39px; height: 39px; }
.tree { border: 1px solid #b0b2b4; height: 1295px; padding: 1px 0 0 1px; display: grid; grid-template: 1264px 28px / 488px 28px; background: #fcfcfc; }
.tree ul { overflow: hidden; }
.tree li { height: 54px; display: flex; align-items: center; white-space: nowrap; padding-bottom: 2px; }
.tree li:nth-child(even) { background: #eeeff1; }
.tree li:nth-child(odd) { background: #fcfcfc; }
.tree li .ico { width: 50px; height: 50px; margin: 0 12px 0 16px; }
.tree li > i { width: 20px; flex: none; }
.tree li > i::before { content: ""; display: block; margin: auto; background: #76797a; }
.tree .c::before { width: 8px; height: 15px; clip-path: polygon(0 0, 100% 50%, 0 100%); }
.tree .o::before { width: 15px; height: 8px; clip-path: polygon(0 0, 100% 0, 50% 100%); }
.l0 { padding-left: 50px; } .l1 { padding-left: 90px; } .l2 { padding-left: 130px; } .l3 { padding-left: 170px; } .l4 { padding-left: 210px; }
.it, .red { font-style: italic; }
.red { color: #f00; }
.del { text-decoration: line-through; text-decoration-thickness: 2px; letter-spacing: .25px; }
.tree .sel:nth-child(n) { background: #3daee9; color: #fff; }
.sel .ico { opacity: .7; }
.sel i::before { background: #2f5c78 !important; }
.pbtns { display: flex; justify-content: flex-end; gap: 11px; margin-top: 21px; }
.w5 { width: 174px; } .w6 { width: 207px; }

/* function dialog */
.dialog { position: absolute; left: 770px; top: 0; width: 1300px; height: 1456px; border-radius: 20px; background: #eeeff1; box-shadow: 0 0 0 1px #000, 0 36px 84px rgba(0,0,0,.62), 0 0 30px rgba(0,0,0,.15); }
.title { height: 57px; background: #3a3a37; border-radius: 20px 20px 0 0; border-top: 2px solid #7a7a78; border-bottom: 1px solid #000; display: flex; align-items: center; gap: 16px; padding: 0 0 2px 16px; position: relative; }
.title i { width: 24px; height: 24px; border-radius: 50%; }
.r { background: #ed6a5e; } .m { background: #5a5a58; } .g { background: #61c554; }
.title span { position: absolute; left: 0; right: 0; top: 8px; line-height: 32px; text-align: center; color: #b8b8b6; font-weight: 700; font-size: 25px; letter-spacing: .5px; }
.frame { margin: 9px 10px 0; width: 1280px; height: 1295px; border: 1px solid #b5b6b8; display: grid; grid-template: 1265px 28px / 1249px 29px; }
.content { overflow: hidden; padding-top: 11px; display: flex; flex-direction: column; gap: 10px; }
.row { display: flex; align-items: center; width: 1400px; padding-left: 11px; flex: none; }
.row label { width: 140px; flex: none; }
.row .req { font-weight: 700; letter-spacing: .3px; }
.req u { color: #f00; text-decoration: none; }
.input { width: 964px; height: 52px; border-radius: 6px; background: #fcfcfc; padding: 0 0 3px 3px; display: flex; align-items: center; margin-right: 10px; letter-spacing: .4px; }
.pink { border: 4px solid #fec0c0; }
.grey { height: 48px; border: 2px solid #a9aaab; }
.input.n { width: 960px; justify-content: space-between; padding: 0 10px 0 3px; }
.clr { width: 33px; height: 25px; }
.id { font-weight: 700; width: 120px; letter-spacing: .7px; }
.cog { width: 42px; height: 42px; }
.r1 { height: 52px; } .r2 { height: 78px; }
.r2 .btn { margin-right: 11px; }
.r4 { height: 159px; }
.area { width: 1200px; height: 159px; border: 1px solid #b5b6b8; background: #fcfcfc; }
.r5 { height: 69px; padding-left: 505px; }
.r5 .btn { height: 69px; padding-left: 5px; gap: 5px; margin-right: 10px; letter-spacing: .15px; }
.w7 { width: 230px; } .w8 { width: 278px; }
.box { width: 30px; height: 30px; border: 2px solid #a0a1a2; background: #fcfcfc; margin-right: 12px; }
.box svg { width: 26px; height: 26px; }

.tabs { display: flex; align-items: flex-end; height: 66px; padding-left: 11px; flex: none; }
.tabs a { height: 61px; border: 2px solid #c0c1c2; border-bottom: 2px solid #acadae; border-left-width: 1px; border-right-width: 1px; border-radius: 7px 7px 0 0; background: linear-gradient(#e9eaea 80%, #e0e1e1); display: flex; align-items: center; gap: 7px; padding-left: 23px; white-space: nowrap; letter-spacing: .1px; }
.tabs span { padding-top: 2px; }
.tabs .cur { height: 66px; background: #fcfcfc; border-bottom: 0; border-color: #acadae; padding: 0 0 5px 22px; }
.tabs a:last-child { border-right-width: 2px; }
.tabs .ico { width: 44px; height: 44px; }
.tabs u, .dfoot u { text-underline-offset: 6px; text-decoration-thickness: 1px; }
.ico.thick { stroke-width: 3; }
.a1 { width: 219px; } .a2 { width: 236px; } .a3 { width: 294px; } .a4 { width: 216px; } .a5 { width: 264px; }
.pane { flex: 1; margin: -10px 0 0 11px; border-left: 2px solid #acadae; background: #fcfcfc; padding-top: 12px; }
.tools { display: flex; gap: 11px; padding-left: 204px; }
.tools .ico[viewBox="0 0 56 52"] { height: 52px; }
.dgrid { margin: 11px 0 0 12px; border-left: 1px solid #b5b6b8; border-top: 1px solid #b5b6b8; height: 620px; width: 1300px; padding-left: 1px; }
.hd, .tr { display: grid; grid-template-columns: 200px 200px 200px 1fr; }
.hd span, .tr span { display: flex; align-items: center; border-right: 2px solid #c9cacb; padding-left: 5px; }
.hd { height: 41px; background: linear-gradient(#fdfdfd, #ececec); border-bottom: 3px solid #acadae; font-size: 22px; }
.hd .ico { width: 32px; height: 32px; margin: 0 4px 0 -1px; }
.tr { height: 60px; border-bottom: 2px solid #c9cacb; }
.tr span { padding-bottom: 1px; }
.alt { background: #eeeff1; }

.dfoot { display: flex; padding: 15px 10px 0 10px; align-items: flex-start; }
.logo { flex: 1; color: #fff; font: 700 62px/53px "DejaVu Sans Mono", monospace; letter-spacing: -.8px; -webkit-text-stroke: 1px #b9b9b9; text-shadow: 3px 4px 4px rgba(0,0,0,.4); }
.dfoot .btn { height: 70px; gap: 4px; letter-spacing: .1px; }
.focus { width: 160px; border-color: #57b3e6; padding-left: 8px; background: linear-gradient(#fdfdfd, #dfe8ef); margin-right: 10px; }
.dfoot .focus .ico { height: 50px; }
.cancel { width: 164px; padding-left: 5px; }
```
